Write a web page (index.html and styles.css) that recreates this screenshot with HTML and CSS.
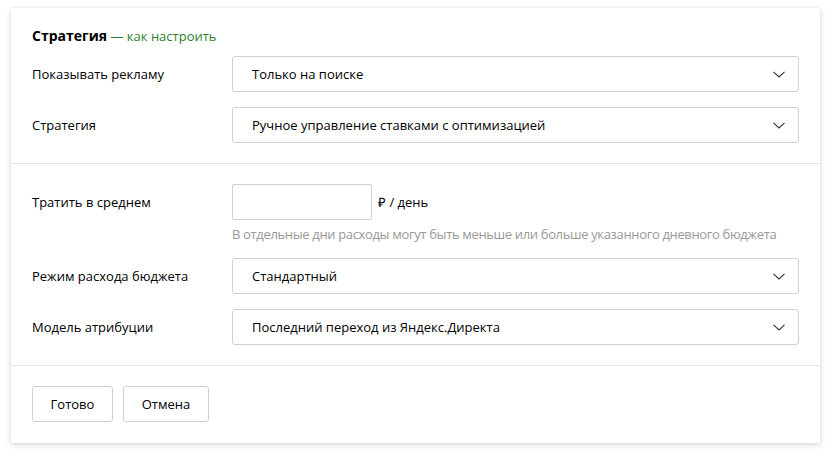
FILE: index.html
```html
<!DOCTYPE html>
<html lang="ru">
<head>
<meta charset="utf-8">
<link rel="stylesheet" href="styles.css">
</head>
<body>
<div class="card">
  <section class="section">
    <div class="title"><span class="title-main">Стратегия</span> <a class="title-link" href="#">— как настроить</a></div>
    <div class="row">
      <div class="label">Показывать рекламу</div>
      <div class="select"><span>Только на поиске</span><svg class="chev" width="12" height="7" viewBox="0 0 12 7"><path d="M0.5 0.8 L6 6 L11.5 0.8" fill="none" stroke="#333" stroke-width="1.1"/></svg></div>
    </div>
    <div class="row">
      <div class="label">Стратегия</div>
      <div class="select"><span>Ручное управление ставками с оптимизацией</span><svg class="chev" width="12" height="7" viewBox="0 0 12 7"><path d="M0.5 0.8 L6 6 L11.5 0.8" fill="none" stroke="#333" stroke-width="1.1"/></svg></div>
    </div>
  </section>
  <section class="section">
    <div class="row row-budget">
      <div class="label">Тратить в среднем</div>
      <div class="budget">
        <div class="budget-line"><div class="input"></div><span class="unit">₽ / день</span></div>
        <div class="hint">В отдельные дни расходы могут быть меньше или больше указанного дневного бюджета</div>
      </div>
    </div>
    <div class="row">
      <div class="label">Режим расхода бюджета</div>
      <div class="select"><span>Стандартный</span><svg class="chev" width="12" height="7" viewBox="0 0 12 7"><path d="M0.5 0.8 L6 6 L11.5 0.8" fill="none" stroke="#333" stroke-width="1.1"/></svg></div>
    </div>
    <div class="row">
      <div class="label">Модель атрибуции</div>
      <div class="select"><span>Последний переход из Яндекс.Директа</span><svg class="chev" width="12" height="7" viewBox="0 0 12 7"><path d="M0.5 0.8 L6 6 L11.5 0.8" fill="none" stroke="#333" stroke-width="1.1"/></svg></div>
    </div>
  </section>
  <section class="section actions">
    <button class="btn btn-done">Готово</button>
    <button class="btn btn-cancel">Отмена</button>
  </section>
</div>
</body>
</html>
```
FILE: styles.css
```css
* { box-sizing: border-box; }
html, body { margin: 0; padding: 0; background: #fff; }
body {
  padding: 8px 17px 13px 11px;
  font-family: "Open Sans", "Liberation Sans", Arial, sans-serif;
  font-size: 13px;
  color: #000;
}
.card {
  width: 809px;
  background: #fff;
  box-shadow: 0 2px 6px rgba(0,0,0,0.15), 0 0 2px rgba(0,0,0,0.08);
}
.section {
  padding: 20px 21px;
  border-bottom: 1px solid #e6e6e6;
  display: flex;
  flex-direction: column;
  gap: 15px;
}
.section:first-child { padding-top: 18px; }
.section:last-child { border-bottom: none; }
.title { height: 20px; line-height: 20px; margin-bottom: -5px; }
.title-main { font-weight: 700; font-size: 14px; }
.title-link { color: #2d7f2d; text-decoration: none; }
.row { display: flex; align-items: center; }
.label { width: 200px; flex: none; }
.select {
  flex: 1;
  height: 36px;
  border: 1px solid #d0d0d0;
  border-radius: 3px;
  display: flex;
  align-items: center;
  justify-content: space-between;
  padding: 0 13px 0 19px;
}
.chev { display: block; }
.row-budget { align-items: flex-start; }
.row-budget .label { line-height: 36px; }
.budget { flex: 1; display: flex; flex-direction: column; gap: 5px; }
.budget-line { display: flex; align-items: center; gap: 6px; }
.input {
  width: 140px;
  height: 36px;
  border: 1px solid #d0d0d0;
  border-radius: 2px;
}
.hint { color: #999; line-height: 18px; white-space: nowrap; letter-spacing: -0.35px; }
.actions { flex-direction: row; gap: 10px; padding-top: 20px; padding-bottom: 21px; }
.btn {
  height: 36px;
  border: 1px solid #d0d0d0;
  border-radius: 3px;
  background: #fff;
  font: inherit;
  color: #000;
  padding: 0;
}
.btn-done { width: 81px; }
.btn-cancel { width: 86px; }
```
